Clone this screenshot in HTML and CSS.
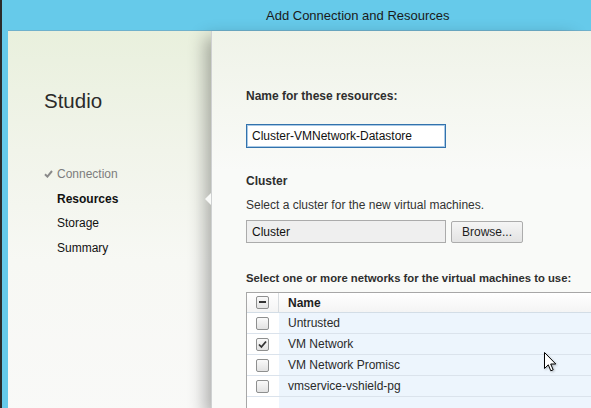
FILE: index.html
```html
<!DOCTYPE html>
<html lang="en">
<head>
    <meta charset="UTF-8">
    <title>Add Connection and Resources</title>
    <link rel="stylesheet" href="styles.css">
</head>
<body>
    <div class="window">
        <div class="titlebar">Add Connection and Resources</div>
        <div class="content">
            <div class="steps">
                <div class="brand">Studio</div>
                <ul class="step-list">
                    <li class="done">
                        <svg class="tick" width="9" height="8" viewBox="0 0 9 8"><path d="M1 4.2 L3.4 6.6 L8 1" fill="none" stroke="#8a8a8a" stroke-width="2"/></svg>
                        Connection
                    </li>
                    <li class="active">Resources</li>
                    <li>Storage</li>
                    <li>Summary</li>
                </ul>
            </div>
            <div class="page">
                <div class="label">Name for these resources:</div>
                <input type="text" class="text-box focused" value="Cluster-VMNetwork-Datastore">

                <div class="label section">Cluster</div>
                <div class="hint">Select a cluster for the new virtual machines.</div>
                <div class="browse-row">
                    <input type="text" class="text-box readonly" value="Cluster" readonly>
                    <button class="btn">Browse...</button>
                </div>

                <div class="label networks">Select one or more networks for the virtual machines to use:</div>
                <div class="grid">
                    <div class="grid-head">
                        <div class="check-cell"><span class="box mixed"></span></div>
                        <div class="name-cell">Name</div>
                    </div>
                    <div class="grid-row">
                        <div class="check-cell"><span class="box"></span></div>
                        <div class="name-cell">Untrusted</div>
                    </div>
                    <div class="grid-row">
                        <div class="check-cell"><span class="box checked">
                            <svg width="11" height="11" viewBox="0 0 11 11"><path d="M2 5.5 L4.4 8 L9 2.5" fill="none" stroke="#333" stroke-width="1.8"/></svg>
                        </span></div>
                        <div class="name-cell">VM Network</div>
                    </div>
                    <div class="grid-row">
                        <div class="check-cell"><span class="box"></span></div>
                        <div class="name-cell">VM Network Promisc</div>
                    </div>
                    <div class="grid-row">
                        <div class="check-cell"><span class="box"></span></div>
                        <div class="name-cell">vmservice-vshield-pg</div>
                    </div>
                    <div class="grid-fill">
                        <div class="check-cell"></div>
                        <div class="name-cell"></div>
                    </div>
                </div>
            </div>
        </div>
        <svg class="cursor" width="13" height="21" viewBox="0 0 13 21">
            <path d="M0.5 0.5 L0.5 16.5 L4.3 12.8 L6.8 18.8 L9.2 17.8 L6.7 12 L11.8 12 Z" fill="#fff" stroke="#000" stroke-width="1"/>
        </svg>
    </div>
</body>
</html>
```

FILE: styles.css
```css
html, body {
    margin: 0;
    padding: 0;
}
body {
    font-family: "Liberation Sans", Arial, sans-serif;
    font-size: 12px;
    color: #222;
    overflow: hidden;
}
.window {
    position: relative;
    height: 408px;
    border-left: 2px solid #2b2b2b;
    background-color: #66caea;
    display: flex;
    flex-direction: column;
    overflow: hidden;
}
.titlebar {
    height: 28px;
    padding-top: 2px;
    padding-left: 264px;
    line-height: 28px;
    font-size: 13px;
    color: #1a1a1a;
}
.content {
    flex: 1;
    margin-left: 6px;
    border-top: 1px solid #6fb1cc;
    display: flex;
    background: linear-gradient(#e9f0dd 0, #f1f4ea 120px, #f7f8f4 230px, #f9f9f8 100%);
}
.steps {
    width: 203px;
    flex-shrink: 0;
    padding-top: 58px;
    box-sizing: border-box;
}
.brand {
    padding-left: 36px;
    font-size: 20.5px;
    line-height: 24px;
    color: #2a2a2a;
}
.step-list {
    list-style: none;
    margin: 49px 0 0;
    padding: 0;
}
.step-list li {
    position: relative;
    padding-left: 49px;
    line-height: 24.6px;
    color: #111;
}
.step-list li.done {
    color: #7d7d7d;
}
.step-list .tick {
    position: absolute;
    left: 36px;
    top: 8px;
}
.step-list li.active {
    font-weight: bold;
}
.step-list li.active::after {
    content: "";
    position: absolute;
    right: 0;
    top: 6px;
    z-index: 1;
    border-right: 6px solid #f9faf8;
    border-top: 6px solid transparent;
    border-bottom: 6px solid transparent;
}
.page {
    flex: 1;
    overflow: hidden;
    padding: 57px 0 0 34px;
    background: linear-gradient(#eff3e8 0, #f5f7f1 80px, #f9faf8 140px, #f9faf8 100%);
    border-left: 1px solid #cfd1d2;
    box-shadow: -12px 0 16px -6px rgba(0, 0, 0, 0.3);
}
.label {
    font-weight: bold;
    line-height: 16px;
    color: #2e2e2e;
    white-space: nowrap;
}
.text-box {
    display: block;
    box-sizing: border-box;
    width: 200px;
    margin: 0;
    padding: 0 5px;
    font-family: inherit;
    font-size: 12px;
    color: #111;
    outline: none;
}
.text-box.focused {
    height: 24px;
    margin-top: 20px;
    border: 1px solid #3272ac;
    box-shadow: inset 0 0 0 1px #a9c9e6;
    background: #fff;
}
.text-box.readonly {
    height: 23px;
    border: 1px solid #ababab;
    background: #efefef;
}
.section {
    margin-top: 25px;
}
.hint {
    margin-top: 8px;
    line-height: 16px;
    color: #333;
}
.browse-row {
    display: flex;
    align-items: flex-start;
    gap: 5px;
    margin-top: 7px;
}
.btn {
    width: 72px;
    height: 22px;
    margin-top: 1px;
    padding: 0;
    border: 1px solid #acacac;
    border-radius: 2px;
    background: linear-gradient(#f5f5f5, #e3e3e3);
    font-family: inherit;
    font-size: 12px;
    color: #1e1e1e;
}
.networks {
    margin-top: 27px;
    font-size: 11.3px;
}
.grid {
    margin-top: 6px;
    width: 420px;
    height: 130px;
    border-left: 1px solid #a7a7a7;
    border-top: 1px solid #a7a7a7;
    display: flex;
    flex-direction: column;
}
.check-cell {
    width: 32px;
    flex-shrink: 0;
    display: flex;
    align-items: center;
    padding-left: 9px;
    box-sizing: border-box;
    background: #fff;
}
.name-cell {
    flex: 1;
    padding-left: 9px;
    display: flex;
    align-items: center;
    background: #edf5fd;
    color: #2a2a2a;
}
.grid-head {
    display: flex;
    height: 19px;
    border-bottom: 1px solid #d3dde6;
}
.grid-head .check-cell {
    border-right: 1px solid #d9dde0;
    background: linear-gradient(#fff, #f4f4f4);
}
.grid-head .name-cell {
    font-weight: bold;
    background: linear-gradient(#fff, #f4f4f4);
    color: #1e1e1e;
}
.grid-row {
    display: flex;
    height: 20px;
    border-bottom: 1px solid #dbe3ec;
}
.grid-fill {
    display: flex;
    flex: 1;
}
.box {
    position: relative;
    width: 11px;
    height: 11px;
    border: 1px solid #8e8f8f;
    border-radius: 2px;
    background: linear-gradient(#fafafa, #e2e2e2);
}
.box svg {
    position: absolute;
    left: 0;
    top: 0;
}
.box.mixed::after {
    content: "";
    position: absolute;
    left: 2px;
    top: 4px;
    width: 7px;
    height: 2px;
    background: #333;
}
.cursor {
    position: absolute;
    left: 542px;
    top: 352px;
    filter: drop-shadow(1px 1px 1px rgba(0, 0, 0, 0.25));
}
```
